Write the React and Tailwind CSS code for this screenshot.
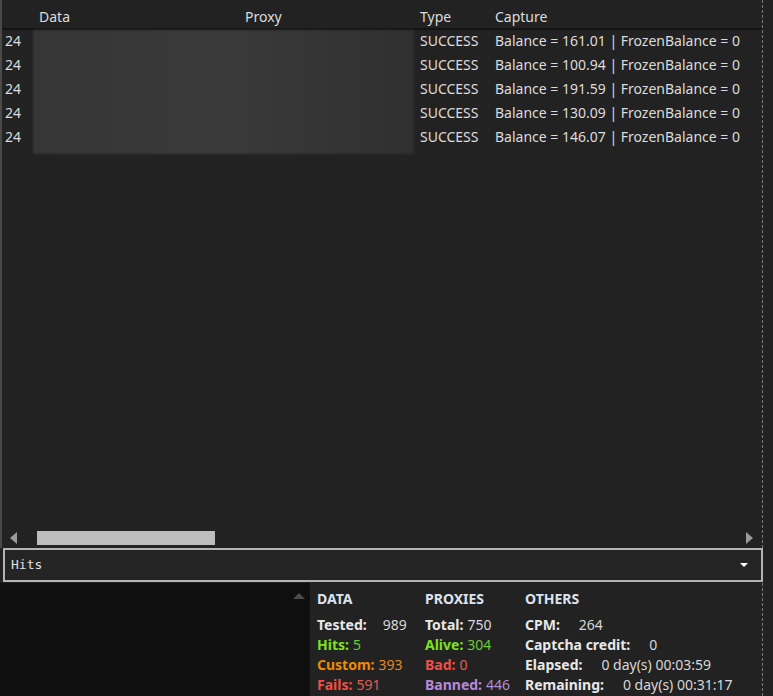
import React from "react";

const rows = [
  { n: "24", type: "SUCCESS", capture: "Balance = 161.01 | FrozenBalance = 0" },
  { n: "24", type: "SUCCESS", capture: "Balance = 100.94 | FrozenBalance = 0" },
  { n: "24", type: "SUCCESS", capture: "Balance = 191.59 | FrozenBalance = 0" },
  { n: "24", type: "SUCCESS", capture: "Balance = 130.09 | FrozenBalance = 0" },
  { n: "24", type: "SUCCESS", capture: "Balance = 146.07 | FrozenBalance = 0" },
];

function Stat({ label, value, color, valueColor, gap = "ml-1" }) {
  return (
    <div className="h-5 flex items-center whitespace-nowrap">
      <span className={`font-bold ${color}`}>{label}</span>
      <span className={`${gap} ${valueColor || color}`}>{value}</span>
    </div>
  );
}

export default function App() {
  return (
    <div
      className="w-[773px] h-[696px] bg-[#222222] flex flex-col text-[14px] text-[#dcdcdc] overflow-hidden"
      style={{ fontFamily: '"Noto Sans", "Open Sans", sans-serif' }}
    >
      {/* grid */}
      <div className="h-[548px] w-[763px] border-r border-dashed border-[#777] shrink-0">
        <div className="h-full flex flex-col border-l-2 border-solid border-[#4a4a4a]">
          <div className="h-[30px] flex items-end pb-[1px] border-b-2 border-[#141414] shrink-0">
            <div className="w-[31px]" />
            <div className="w-[206px] pl-[6px]">Data</div>
            <div className="w-[175px] pl-[6px]">Proxy</div>
            <div className="w-[75px] pl-[6px]">Type</div>
            <div className="pl-[6px]">Capture</div>
          </div>
          <div className="flex">
            <div className="w-[31px] flex flex-col">
              {rows.map((r, i) => (
                <div key={i} className="h-6 flex items-center pl-[3px] pb-[4px]">{r.n}</div>
              ))}
            </div>
            <div className="w-[381px] h-[124px] bg-gradient-to-r from-[#363636] via-[#3a3a3a] to-[#303030] blur-[1px]" />
            <div className="flex flex-col">
              {rows.map((r, i) => (
                <div key={i} className="h-6 flex items-center whitespace-nowrap pb-[4px]">
                  <div className="w-[75px] pl-[6px]">{r.type}</div>
                  <div className="pl-[6px]">{r.capture}</div>
                </div>
              ))}
            </div>
          </div>
          <div className="flex-1" />
          {/* horizontal scrollbar */}
          <div className="h-[19px] flex items-center shrink-0 mb-[1px]">
            <div className="w-[33px] flex justify-center pl-[2px]">
              <div className="w-0 h-0 border-y-[6px] border-y-transparent border-r-[7px] border-r-[#9a9a9a] mr-[12px]" />
            </div>
            <div className="w-[178px] h-[14px] bg-[#bdbdbd] ml-[2px]" />
            <div className="flex-1" />
            <div className="w-0 h-0 border-y-[6px] border-y-transparent border-l-[7px] border-l-[#9a9a9a] mr-[9px]" />
          </div>
        </div>
      </div>

      {/* combobox */}
      <div className="ml-[3px] w-[760px] h-[34px] border-2 border-[#b4b4b4] bg-[#242424] flex items-center px-[6px] shrink-0">
        <span className="flex-1 text-[13px] text-[#e0e0e0]" style={{ fontFamily: '"DejaVu Sans Mono", "Liberation Mono", monospace' }}>
          Hits
        </span>
        <div className="w-0 h-0 border-x-[4px] border-x-transparent border-t-[4px] border-t-white mr-[7px]" />
      </div>

      {/* bottom */}
      <div className="flex flex-1 mt-[1px]">
        <div className="w-[310px] bg-[#0f0f0f] flex justify-end pt-[10px] pr-[5px]">
          <div className="w-0 h-0 border-x-[6px] border-x-transparent border-b-[6px] border-b-[#4a4a4a]" />
        </div>
        <div className="w-[453px] border-r border-dashed border-[#777] flex text-[14px] pl-[7px] pt-[5px]">
          <div className="w-[108px]">
            <div className="h-6 font-bold text-[#dde3ee] mb-[2px]">DATA</div>
            <Stat label="Tested:" value="989" color="text-[#e8e8e8]" valueColor="text-[#d8d8d8]" gap="ml-[16px]" />
            <Stat label="Hits:" value="5" color="text-[#7ee020]" valueColor="text-[#66cc33]" />
            <Stat label="Custom:" value="393" color="text-[#f08a00]" valueColor="text-[#e8861c]" />
            <Stat label="Fails:" value="591" color="text-[#ef4f45]" valueColor="text-[#e85a50]" />
          </div>
          <div className="w-[100px]">
            <div className="h-6 font-bold text-[#dde3ee] mb-[2px]">PROXIES</div>
            <Stat label="Total:" value="750" color="text-[#e8e8e8]" valueColor="text-[#d8d8d8]" />
            <Stat label="Alive:" value="304" color="text-[#7ee020]" valueColor="text-[#66cc33]" />
            <Stat label="Bad:" value="0" color="text-[#ef4f45]" valueColor="text-[#e85a50]" />
            <Stat label="Banned:" value="446" color="text-[#b68ad8]" valueColor="text-[#b08cd8]" />
          </div>
          <div>
            <div className="h-6 font-bold text-[#dde3ee] mb-[2px]">OTHERS</div>
            <Stat label="CPM:" value="264" color="text-[#e8e8e8]" valueColor="text-[#d8d8d8]" gap="ml-[19px]" />
            <Stat label="Captcha credit:" value="0" color="text-[#e8e8e8]" valueColor="text-[#d8d8d8]" gap="ml-[19px]" />
            <Stat label="Elapsed:" value="0 day(s) 00:03:59" color="text-[#e8e8e8]" valueColor="text-[#d8d8d8]" gap="ml-[19px]" />
            <Stat label="Remaining:" value="0 day(s) 00:31:17" color="text-[#e8e8e8]" valueColor="text-[#d8d8d8]" gap="ml-[19px]" />
          </div>
        </div>
      </div>
    </div>
  );
}
